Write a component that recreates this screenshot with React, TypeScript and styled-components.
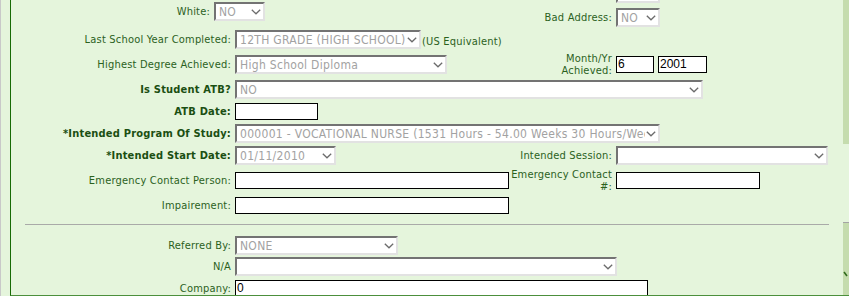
import React from 'react';
import styled, { createGlobalStyle } from 'styled-components';

const Global = createGlobalStyle`
  html, body { margin: 0; padding: 0; background: #e5f5dc; overflow: hidden; }
  body { font-family: Tahoma, "DejaVu Sans Condensed", "DejaVu Sans", sans-serif; font-size: 11px; }
`;

const Page = styled.div`
  display: flex;
  width: 849px;
  height: 296px;
  overflow: hidden;
  background: #e5f5dc;
  border-left: 1px solid #c9c9c9;
  box-sizing: border-box;
`;

const Gutter = styled.div`
  width: 9px;
  flex: none;
`;

const Frame = styled.div`
  flex: 1;
  display: flex;
  height: 296px;
  box-sizing: border-box;
  border-left: 1px solid #176a05;
  border-bottom: 1px solid #4c8f3c;
  overflow: hidden;
`;

const Form = styled.div`
  flex: 1;
  display: flex;
  flex-direction: column;
  padding-top: 2px;
`;

const Row = styled.div<{ $h: number; $cols?: string }>`
  display: grid;
  grid-template-columns: ${(p) => p.$cols ?? '220px 273px 100px 1fr'};
  column-gap: 4px;
  align-items: start;
  height: ${(p) => p.$h}px;
  flex: none;
`;

const Label = styled.div<{ $bold?: boolean; $h?: number; $mt?: number }>`
  display: flex;
  align-items: center;
  justify-content: flex-end;
  text-align: right;
  height: ${(p) => p.$h ?? 19}px;
  margin-top: ${(p) => p.$mt ?? 0}px;
  line-height: 12px;
  letter-spacing: 0.2px;
  white-space: nowrap;
  color: ${(p) => (p.$bold ? '#1b4f12' : '#2b611d')};
  font-weight: ${(p) => (p.$bold ? 700 : 400)};
`;

const Cell = styled.div<{ $span?: boolean; $mt?: number; $gap?: number }>`
  grid-column: ${(p) => (p.$span ? '2 / -1' : 'auto')};
  display: flex;
  align-items: flex-start;
  gap: ${(p) => p.$gap ?? 0}px;
  margin-top: ${(p) => p.$mt ?? 0}px;
`;

const Stack = styled.div`
  display: flex;
  flex-direction: column;
  align-items: flex-start;
  gap: 5px;
`;

const SelectBox = styled.div<{ $w: number; $dim?: boolean; $mt?: number }>`
  display: flex;
  align-items: center;
  width: ${(p) => p.$w}px;
  height: 19px;
  margin-top: ${(p) => p.$mt ?? 0}px;
  box-sizing: border-box;
  border: 2px solid;
  border-color: #737373 #e2e2e2 #e2e2e2 #737373;
  background: #fff;
  padding: 0 2px 0 3px;
  color: ${(p) => (p.$dim ? '#a2a2a2' : '#000')};
  font-family: Tahoma, "DejaVu Sans Condensed", "DejaVu Sans", sans-serif;
  font-size: 12px;
  letter-spacing: 0.3px;
  flex: none;
`;

const SelectText = styled.span`
  flex: 1;
  overflow: hidden;
  white-space: nowrap;
`;

const Chevron = styled.svg`
  flex: none;
  margin-left: 1px;
`;

const TextInput = styled.div<{ $w: number; $mt?: number }>`
  width: ${(p) => p.$w}px;
  height: 17px;
  margin-top: ${(p) => p.$mt ?? 0}px;
  box-sizing: border-box;
  border: 1px solid #000;
  background: #fff;
  padding: 0 1px;
  font-family: "Liberation Sans", Arial, sans-serif;
  font-size: 12px;
  line-height: 15px;
  color: #000;
  flex: none;
  white-space: nowrap;
`;

const Note = styled.span`
  color: #2b611d;
  letter-spacing: 0.2px;
  padding-top: 5px;
  padding-left: 1px;
  white-space: nowrap;
`;

const Divider = styled.div`
  height: 19px;
  flex: none;
  display: flex;
  flex-direction: column;
  padding: 7px 14px 0 14px;
  box-sizing: border-box;
`;

const Rule = styled.div`
  height: 1px;
  background: #a9aaa8;
`;

const Side = styled.div`
  width: 6px;
  flex: none;
  display: flex;
  flex-direction: column;
`;

const SideTop = styled.div`
  height: 144px;
  background: #c5dcae;
`;

const SideGap = styled.div`
  height: 78px;
`;

const SideBottom = styled.div`
  flex: 1;
  background: #c5dcae;
  border-top: 1px solid #a4a4a4;
  display: flex;
  flex-direction: column;
  padding-top: 48px;
  box-sizing: border-box;
`;

function Select({ w, text = '', dim = true, mt }: { w: number; text?: string; dim?: boolean; mt?: number }) {
  return (
    <SelectBox $w={w} $dim={dim} $mt={mt}>
      <SelectText>{text}</SelectText>
      <Chevron width="10" height="6" viewBox="0 0 10 6">
        <path d="M0.8 0.8 L5 4.8 L9.2 0.8" fill="none" stroke="#6c6c6c" strokeWidth="1.3" />
      </Chevron>
    </SelectBox>
  );
}

export default function App() {
  return (
    <>
      <Global />
      <Page>
        <Gutter />
        <Frame>
          <Form>
            <Row $h={28} $cols="199px 294px 100px 1fr">
              <Label>White:</Label>
              <Cell>
                <Select w={51} text="NO" />
              </Cell>
              <Label $mt={6}>Bad Address:</Label>
              <Stack>
                <Select w={44} mt={-18} />
                <Select w={44} text="NO" />
              </Stack>
            </Row>
            <Row $h={25}>
              <Label>Last School Year Completed:</Label>
              <Cell $span>
                <Select w={186} text="12TH GRADE (HIGH SCHOOL)" />
                <Note>(US Equivalent)</Note>
              </Cell>
            </Row>
            <Row $h={25}>
              <Label>Highest Degree Achieved:</Label>
              <Cell>
                <Select w={212} text="High School Diploma" />
              </Cell>
              <Label $h={18} $mt={1}>
                Month/Yr
                <br />
                Achieved:
              </Label>
              <Cell $mt={1} $gap={4}>
                <TextInput $w={38}>6</TextInput>
                <TextInput $w={49}>2001</TextInput>
              </Cell>
            </Row>
            <Row $h={23}>
              <Label $bold>Is Student ATB?</Label>
              <Cell $span>
                <Select w={468} text="NO" />
              </Cell>
            </Row>
            <Row $h={21}>
              <Label $bold $h={17}>ATB Date:</Label>
              <Cell>
                <TextInput $w={83} />
              </Cell>
            </Row>
            <Row $h={22}>
              <Label $bold>*Intended Program Of Study:</Label>
              <Cell $span>
                <Select w={425} text="000001 - VOCATIONAL NURSE (1531 Hours - 54.00 Weeks 30 Hours/Week)" />
              </Cell>
            </Row>
            <Row $h={26}>
              <Label $bold>*Intended Start Date:</Label>
              <Cell>
                <Select w={101} text="01/11/2010" />
              </Cell>
              <Label>Intended Session:</Label>
              <Cell>
                <Select w={212} dim={false} />
              </Cell>
            </Row>
            <Row $h={25}>
              <Label $h={17}>Emergency Contact Person:</Label>
              <Cell>
                <TextInput $w={274} />
              </Cell>
              <Label $h={17}>
                Emergency Contact
                <br />
                #:
              </Label>
              <Cell>
                <TextInput $w={144} />
              </Cell>
            </Row>
            <Row $h={20}>
              <Label $h={17}>Impairement:</Label>
              <Cell>
                <TextInput $w={274} />
              </Cell>
            </Row>
            <Divider>
              <Rule />
            </Divider>
            <Row $h={21}>
              <Label>Referred By:</Label>
              <Cell $span>
                <Select w={163} text="NONE" />
              </Cell>
            </Row>
            <Row $h={23}>
              <Label>N/A</Label>
              <Cell $span>
                <Select w={382} dim={false} />
              </Cell>
            </Row>
            <Row $h={20}>
              <Label $h={17}>Company:</Label>
              <Cell $span>
                <TextInput $w={413}>0</TextInput>
              </Cell>
            </Row>
          </Form>
          <Side>
            <SideTop />
            <SideGap />
            <SideBottom>
              <svg width="6" height="8" viewBox="0 0 6 8">
                <path d="M1 1 L4 5" fill="none" stroke="#2f6a1c" strokeWidth="1.6" />
              </svg>
            </SideBottom>
          </Side>
        </Frame>
      </Page>
    </>
  );
}
